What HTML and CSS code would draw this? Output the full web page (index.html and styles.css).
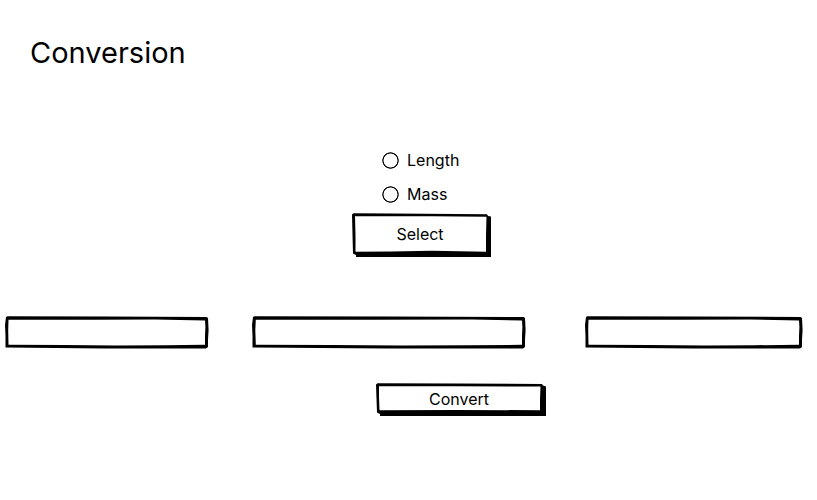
FILE: index.html
```html
<!DOCTYPE html>
<html lang="en">
<head>
<meta charset="utf-8">
<meta name="viewport" content="width=device-width, initial-scale=1">
<title>Conversion</title>
<link rel="stylesheet" href="styles.css">
</head>
<body>
<h1 class="title">Conversion</h1>
<form class="converter">
  <fieldset class="kinds">
    <label class="kind"><input class="radio" type="radio" name="kind" value="length">Length</label>
    <label class="kind"><input class="radio" type="radio" name="kind" value="mass">Mass</label>
    <button class="button select" type="button">
      <svg class="frame" viewBox="0 0 139 44" preserveAspectRatio="none" aria-hidden="true">
        <path fill-rule="evenodd" d="M0 1.5L1.5 .3L40 .5L135 1.2L136 3L139 3.5V44H4V42L1 40.5L.5 22ZM3 3.2L3.5 22V38.7L40 38.5L80 37.8L134 38.7V22L134.5 3.8L80 3.2Z"/>
      </svg>
      <span class="caption">Select</span>
    </button>
  </fieldset>
  <div class="fields">
    <div class="field">
      <svg class="frame" viewBox="0 0 204 33" preserveAspectRatio="none" aria-hidden="true">
        <path fill-rule="evenodd" d="M1 1L2.5 .2L100 .5L201.5 1L203 2L203.6 14L203 24V31L201 32.6L100 32.4L.5 31.5V20L0 9ZM3.5 3.8L3.2 14L3.5 28.7L60 29L110 29.6L160 29.2L200 28.8V20L200.4 11L200 4.4L150 3.6L90 3.8Z"/>
      </svg>
      <input class="input" type="text" aria-label="Value">
    </div>
    <div class="field unit">
      <svg class="frame" viewBox="0 0 274 33" preserveAspectRatio="none" aria-hidden="true">
        <path fill-rule="evenodd" d="M1 1L2.5 .2L135 .5L271.5 1L273 2L273.6 14L273 24V31L271 32.6L135 32.4L.5 31.5V20L0 9ZM3.8 3.8L3.3 14L3.8 28.7L80 29L150 29.6L215 29.2L270 28.8V20L270.4 11L270 4.4L220 3.6L120 3.8Z"/>
      </svg>
      <input class="input" type="text" aria-label="From unit">
    </div>
    <div class="field target">
      <svg class="frame" viewBox="0 0 218 33" preserveAspectRatio="none" aria-hidden="true">
        <path fill-rule="evenodd" d="M1 1L2.5 .2L108 .5L215.5 1L217 2L217.6 14L217 24V31L215 32.6L108 32.4L.5 31.5V20L0 9ZM3.5 3.8L3.2 14L3.5 28.7L65 29L120 29.6L170 29.2L214 28.8V20L214.4 11L214 4.4L165 3.6L95 3.8Z"/>
      </svg>
      <input class="input" type="text" aria-label="To unit">
    </div>
  </div>
  <button class="button convert" type="submit">
    <svg class="frame" viewBox="0 0 170 33" preserveAspectRatio="none" aria-hidden="true">
      <path fill-rule="evenodd" d="M0 1.5L1.5 .3L80 .5L166 1L167 2.5L170 3.5V33H4V31L1 29.5L.5 16ZM3 3.3L3 14L3.5 27.2L80 27L164 27.2V16L164.5 3.6L80 3.2Z"/>
    </svg>
    <span class="caption">Convert</span>
  </button>
</form>
</body>
</html>
```
FILE: styles.css
```css
* {
  box-sizing: border-box;
}

body {
  margin: 0;
  background: #fff;
  color: #000;
  font: 16px/20px Inter, "Open Sans", sans-serif;
}

.title {
  margin: 0;
  padding: 33px 30px 0;
  font-size: 29px;
  font-weight: 400;
  line-height: 40px;
}

.converter {
  display: flex;
  flex-direction: column;
  padding-top: 77px;
}

.kinds {
  display: flex;
  flex-direction: column;
  align-self: center;
  gap: 14px;
  margin: 0 0 0 26px;
  padding: 0;
  border: 0;
}

.kind {
  display: flex;
  align-items: center;
  gap: 8px;
  margin-left: 30px;
}

.radio {
  appearance: none;
  width: 17px;
  height: 17px;
  margin: 0;
  background: radial-gradient(closest-side, transparent 78%, #000 86%, #000 92%, transparent 100%);
}

.radio:checked {
  background: radial-gradient(closest-side, #000 45%, transparent 52%, transparent 78%, #000 86%, #000 92%, transparent 100%);
}

.button {
  position: relative;
  padding: 0;
  border: 0;
  background: none;
  color: inherit;
  font: inherit;
}

.frame {
  position: absolute;
  inset: 0;
  width: 100%;
  height: 100%;
  pointer-events: none;
}

.caption {
  position: relative;
}

.select {
  width: 139px;
  height: 44px;
  margin-top: -5px;
  padding-right: 3px;
  padding-bottom: 2px;
}

.fields {
  display: grid;
  grid-template-columns: 204fr 43fr 274fr 59fr 218fr;
  margin-top: 59px;
  padding: 0 14px 0 5px;
}

.field {
  position: relative;
  height: 33px;
}

.unit {
  grid-column: 3;
}

.target {
  grid-column: 5;
}

.input {
  width: 100%;
  height: 100%;
  padding: 4px 8px;
  border: 0;
  outline: 0;
  background: none;
  font: inherit;
}

.convert {
  align-self: center;
  width: 170px;
  height: 33px;
  margin: 34px 0 0 105px;
  padding-right: 4px;
  padding-bottom: 2px;
}
```
